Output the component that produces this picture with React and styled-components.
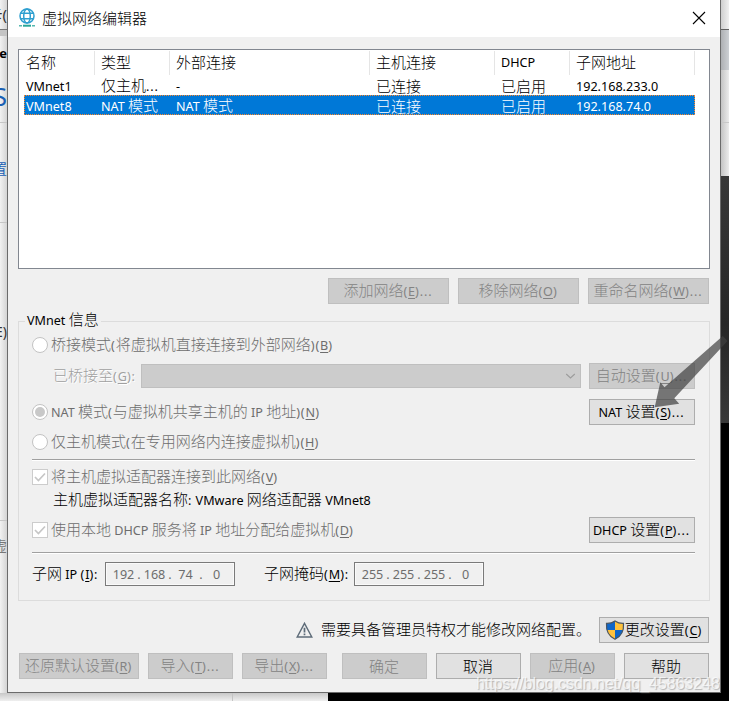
import React from "react";
import styled, { createGlobalStyle } from "styled-components";

const GlobalStyle = createGlobalStyle`
  * {
    box-sizing: border-box;
  }
  body {
    margin: 0;
    overflow: hidden;
    background: #ffffff;
    font-family: "Noto Sans", "Noto Sans CJK SC", sans-serif;
  }
`;

const Desktop = styled.div`
  position: relative;
  display: grid;
  grid-template-columns: 7px 714px 8px;
  grid-template-rows: 693px 8px;
  width: 730px;
  height: 702px;
  overflow: hidden;
  font-size: 15px;
  color: #000000;
`;

const LeftStrip = styled.div`
  display: flex;
  flex-direction: column;
  overflow: hidden;
  background: linear-gradient(to right, #f2f2f2, #d4d4d4);
`;

const StripCell = styled.div`
  display: flex;
  justify-content: flex-end;
  align-items: center;
  flex: none;
  height: ${(p) => p.$h}px;
  border-bottom: ${(p) => (p.$line ? `1px solid ${p.$line}` : "none")};
  background: ${(p) => p.$bg || "transparent"};
  color: ${(p) => p.$color || "#333333"};
  font-size: ${(p) => p.$size || 14}px;
  font-weight: ${(p) => p.$weight || 400};
  line-height: 1;
  white-space: nowrap;
`;

const RightStrip = styled.div`
  display: flex;
  flex-direction: column;
`;

const BottomStrip = styled.div`
  grid-column: 1 / 4;
  display: flex;
`;

const BottomLight = styled.div`
  width: ${(p) => p.$w}px;
  border-right: ${(p) => (p.$line ? "1px solid #c4c4c4" : "none")};
  background: linear-gradient(#c8c8c8, #efefef);
`;

const BottomDark = styled.div`
  flex: 1;
  background: #000000;
`;

const Dialog = styled.div`
  display: flex;
  flex-direction: column;
  border: 1px solid #6b6b6b;
  border-top: none;
  background: #f0f0f0;
`;

const TitleBar = styled.div`
  display: flex;
  align-items: center;
  flex: none;
  height: 37px;
  padding: 0 14px 1px 10px;
  background: #ffffff;
`;

const Title = styled.div`
  flex: 1;
  margin-left: 6px;
  font-size: 15px;
  line-height: 20px;
`;

const Body = styled.div`
  padding: 12px 10px 0;
`;

const ListView = styled.div`
  height: 220px;
  padding-top: 1px;
  border: 1px solid #828790;
  background: #ffffff;
`;

const ListHeader = styled.div`
  display: grid;
  grid-template-columns: 76px 75px 200px 125px 75px 125px;
  height: 24px;
`;

const HeaderCell = styled.div`
  display: flex;
  align-items: center;
  padding: 0 0 2px ${(p) => (p.$first ? 7 : 6)}px;
  border-right: 1px solid #e5e5e5;
`;

const ListRow = styled.div`
  display: grid;
  grid-template-columns: 71px 75px 200px 125px 75px 125px;
  width: 671px;
  height: 20px;
  margin-left: 5px;
  background: ${(p) => (p.$selected ? "#0078d7" : "transparent")};
  color: ${(p) => (p.$selected ? "#ffffff" : "#000000")};
  outline: ${(p) => (p.$selected ? "1px dotted #ff8728" : "none")};
  outline-offset: -1px;
`;

const ListCell = styled.div`
  display: flex;
  align-items: center;
  padding: 0 0 2px ${(p) => (p.$first ? 2 : 6)}px;
`;

const Text = styled.span`
  display: inline-block;
  font-weight: 300;
  line-height: 20px;
  white-space: pre;
`;

const Latin = styled.span`
  font-size: 12.6px;
  font-weight: 400;
`;

const Punct = styled(Latin)`
  letter-spacing: 0.9px;
`;

const Key = styled(Latin)`
  text-decoration: underline;
  text-underline-offset: 2px;
`;

const Button = styled.button`
  display: flex;
  align-items: center;
  justify-content: center;
  flex: none;
  width: ${(p) => p.$w}px;
  height: 26px;
  margin-left: ${(p) => p.$ml || 0}px;
  padding: 0 1px 1px 0;
  border: 1px solid #adadad;
  border-radius: 0;
  background: #e1e1e1;
  color: #000000;
  font-family: inherit;
  font-size: 15px;

  &:disabled {
    border-color: #bfbfbf;
    background: #cccccc;
    color: #838383;
  }
`;

const ListActions = styled.div`
  display: flex;
  justify-content: flex-end;
  gap: 9px;
  margin-top: 9px;
  padding-right: 1px;
`;

const Group = styled.div`
  height: 280px;
  margin-top: 17px;
  padding: 0 14px 0 13px;
  border: 1px solid #dcdcdc;
`;

const Legend = styled.div`
  display: flex;
  align-items: center;
  width: fit-content;
  height: 18px;
  margin: -10px 0 0 -7px;
  padding: 0 2px 2px;
  background: #f0f0f0;
`;

const Row = styled.div`
  display: flex;
  align-items: center;
  height: ${(p) => p.$h}px;
  margin-top: ${(p) => p.$mt || 0}px;
  padding-left: ${(p) => p.$pl || 0}px;
  color: ${(p) => p.$color || "#000000"};
`;

const Grow = styled.div`
  flex: 1;
`;

const Radio = styled.span`
  display: flex;
  align-items: center;
  justify-content: center;
  flex: none;
  width: 16px;
  height: 16px;
  margin-right: 3px;
  border: 1px solid #c3c3c3;
  border-radius: 50%;
  background: #ffffff;

  &::after {
    content: "";
    width: 10px;
    height: 10px;
    border-radius: 50%;
    background: ${(p) => (p.$on ? "#c8c8c8" : "transparent")};
  }
`;

const CheckBox = styled.span`
  display: flex;
  align-items: center;
  justify-content: center;
  flex: none;
  width: 16px;
  height: 16px;
  margin-right: 3px;
  border: 1px solid #cccccc;
  background: #ffffff;
`;

const Combo = styled.div`
  display: flex;
  align-items: center;
  justify-content: flex-end;
  width: 440px;
  height: 24px;
  padding-right: 4px;
  border: 1px solid #bfbfbf;
  background: #cccccc;
`;

const ComboLabel = styled.div`
  width: 88px;
  color: #a0a0a0;
  text-shadow: 1px 1px 0 #ffffff;
`;

const Separator = styled.div`
  height: 2px;
  margin-top: 7px;
  border-top: 1px solid #a0a0a0;
  border-bottom: 1px solid #ffffff;
`;

const IpLabel = styled.div`
  width: ${(p) => p.$w}px;
`;

const IpBox = styled.div`
  display: flex;
  align-items: center;
  width: 130px;
  height: 24px;
  padding-left: 4px;
  border: 1px solid #7a7a7a;
  box-shadow: inset 0 0 0 1px #fafafa;
  color: #6d6d6d;
  font-size: 12.6px;
`;

const Octet = styled.span`
  width: 27px;
  text-align: center;
`;

const Dot = styled.span`
  width: 4px;
  text-align: center;
`;

const Notice = styled.div`
  display: flex;
  align-items: center;
  justify-content: flex-end;
  margin-top: 16px;
  padding-right: 1px;
`;

const NoticeText = styled.div`
  width: 278px;
  margin-left: 8px;
  padding-bottom: 2px;
`;

const Footer = styled.div`
  display: flex;
  margin-top: 10px;
  padding-left: 1px;
`;

const Arrow = styled.svg`
  position: absolute;
  left: 650px;
  top: 330px;
`;

const Watermark = styled.div`
  position: absolute;
  left: 476px;
  top: 674px;
  color: rgba(255, 255, 255, 0.7);
  font-family: "Liberation Sans", sans-serif;
  font-size: 16px;
  letter-spacing: -0.05px;
  line-height: 20px;
  white-space: nowrap;
  text-shadow: 1px 1px 1px rgba(120, 120, 120, 0.5);
`;

// Latin runs are set smaller than the Chinese ones, "&X" marks an access key
const Label = ({ children }) => {
  const parts = children
    .split(/(&[A-Z]|\.{3}|[():]+|[\x20-\x25\x27\x2a-\x39\x3b-\x7e]+)/)
    .filter(Boolean);
  return (
    <Text>
      {parts.map((part, i) => {
        if (part[0] === "&") return <Key key={i}>{part[1]}</Key>;
        if (/^([():]+|\.{3})/.test(part)) return <Punct key={i}>{part}</Punct>;
        if (part.charCodeAt(0) < 128) return <Latin key={i}>{part}</Latin>;
        return part;
      })}
    </Text>
  );
};

const GlobeIcon = () => (
  <svg width="18" height="20" viewBox="0 0 18 20" fill="none" stroke="#2e9fd0" strokeWidth="1.5">
    <circle cx="9" cy="8" r="7" />
    <ellipse cx="9" cy="8" rx="3.3" ry="7" />
    <path d="M2.5 5.3h13M2.5 10.7h13" />
    <path d="M1 17.7h3M14 17.7h3" stroke="#55b8b0" />
    <path d="M5 17.7h8" stroke="#28a698" strokeWidth="2" />
  </svg>
);

const CloseIcon = () => (
  <svg width="14" height="14" viewBox="0 0 14 14" stroke="#000000" strokeWidth="1.1">
    <path d="M1 1l12 12M13 1L1 13" />
  </svg>
);

const CheckIcon = () => (
  <svg width="14" height="14" viewBox="0 0 14 14" fill="none" stroke="#c6c6c6" strokeWidth="1.7">
    <path d="M2 7l3.4 3.5L12 3.5" />
  </svg>
);

const ChevronIcon = () => (
  <svg width="11" height="8" viewBox="0 0 11 8" fill="none" stroke="#9c9c9c" strokeWidth="1.1">
    <path d="M1.2 2l4.3 4 4.3-4" />
  </svg>
);

const WarningIcon = () => (
  <svg width="17" height="16" viewBox="0 0 17 16" fill="none" stroke="#5d6b78">
    <path d="M8.5 1.3L15.8 15H1.2z" strokeWidth="1.4" />
    <path d="M8.5 5.8v4.6M8.5 11.6v1.6" strokeWidth="1.7" />
  </svg>
);

const ShieldIcon = () => (
  <svg width="20" height="20" viewBox="0 0 20 20">
    <defs>
      <clipPath id="shield">
        <path d="M10 1C7.5 2.8 4.5 3.5 1.5 3.4C1 10 3 16 10 19.3C17 16 19 10 18.5 3.4C15.5 3.5 12.5 2.8 10 1z" />
      </clipPath>
    </defs>
    <g clipPath="url(#shield)">
      <path d="M0 0h10v10H0z" fill="#0f66c8" />
      <path d="M10 0h10v10H10z" fill="#ffc23c" />
      <path d="M0 10h10v10H0z" fill="#ffc23c" />
      <path d="M10 10h10v10H10z" fill="#0f66c8" />
    </g>
    <path
      d="M10 1C7.5 2.8 4.5 3.5 1.5 3.4C1 10 3 16 10 19.3C17 16 19 10 18.5 3.4C15.5 3.5 12.5 2.8 10 1z"
      fill="none"
      stroke="#4a5560"
      strokeWidth="1.2"
    />
  </svg>
);

const headers = ["名称", "类型", "外部连接", "主机连接", "DHCP", "子网地址"];

const networks = [
  ["VMnet1", "仅主机...", "-", "已连接", "已启用", "192.168.233.0"],
  ["VMnet8", "NAT 模式", "NAT 模式", "已连接", "已启用", "192.168.74.0"],
];

const IpField = ({ value }) => (
  <IpBox>
    {value.map((n, i) => (
      <React.Fragment key={i}>
        {i > 0 && <Dot>.</Dot>}
        <Octet>{n}</Octet>
      </React.Fragment>
    ))}
  </IpBox>
);

const App = () => {
  return (
    <>
      <GlobalStyle />
      <Desktop>
        <LeftStrip>
          <StripCell $h={30} $line="#777777" $size={15}>卡(</StripCell>
          <StripCell $h={6} $bg="#c4c4c4" />
          <StripCell $h={35} $color="#000000" $weight={700} $size={13}>Ce</StripCell>
          <StripCell $h={52} $line="#c6c6c6" $color="#1a5fb4" $size={25}>S</StripCell>
          <StripCell $h={26} />
          <StripCell $h={40} $color="#1a5fb4" $size={14}>置</StripCell>
          <StripCell $h={34} $line="#c6c6c6" />
          <StripCell $h={217} $size={14}>E)</StripCell>
          <StripCell $h={81} $line="#c6c6c6" />
          <StripCell $h={50} $size={14} $color="#777777">虚</StripCell>
        </LeftStrip>
        <Dialog>
          <TitleBar>
            <GlobeIcon />
            <Title><Text>虚拟网络编辑器</Text></Title>
            <CloseIcon />
          </TitleBar>
          <Body>
            <ListView>
              <ListHeader>
                {headers.map((h, i) => (
                  <HeaderCell key={h} $first={i === 0}>
                    <Label>{h}</Label>
                  </HeaderCell>
                ))}
              </ListHeader>
              {networks.map((cells, i) => (
                <ListRow key={cells[0]} $selected={i === 1}>
                  {cells.map((c, j) => (
                    <ListCell key={j} $first={j === 0}>
                      <Label>{c}</Label>
                    </ListCell>
                  ))}
                </ListRow>
              ))}
            </ListView>
            <ListActions>
              <Button $w={121} disabled><Label>添加网络(&E)...</Label></Button>
              <Button $w={121} disabled><Label>移除网络(&O)</Label></Button>
              <Button $w={121} disabled><Label>重命名网络(&W)...</Label></Button>
            </ListActions>
            <Group>
              <Legend><Label>VMnet 信息</Label></Legend>
              <Row $h={30} $color="#6d6d6d">
                <Radio />
                <Label>桥接模式(将虚拟机直接连接到外部网络)(&B)</Label>
              </Row>
              <Row $h={32} $pl={21}>
                <ComboLabel><Label>已桥接至(&G):</Label></ComboLabel>
                <Combo><ChevronIcon /></Combo>
                <Grow />
                <Button $w={106} disabled><Label>自动设置(&U)...</Label></Button>
              </Row>
              <Row $h={40} $color="#6d6d6d">
                <Radio $on />
                <Label>NAT 模式(与虚拟机共享主机的 IP 地址)(&N)</Label>
                <Grow />
                <Button $w={106}><Label>NAT 设置(&S)...</Label></Button>
              </Row>
              <Row $h={20} $color="#6d6d6d">
                <Radio />
                <Label>仅主机模式(在专用网络内连接虚拟机)(&H)</Label>
              </Row>
              <Separator />
              <Row $h={32} $color="#6d6d6d">
                <CheckBox><CheckIcon /></CheckBox>
                <Label>将主机虚拟适配器连接到此网络(&V)</Label>
              </Row>
              <Row $h={14} $pl={21}>
                <Label>主机虚拟适配器名称: VMware 网络适配器 VMnet8</Label>
              </Row>
              <Row $h={30} $mt={8} $color="#6d6d6d">
                <CheckBox><CheckIcon /></CheckBox>
                <Label>使用本地 DHCP 服务将 IP 地址分配给虚拟机(&D)</Label>
                <Grow />
                <Button $w={106}><Label>DHCP 设置(&P)...</Label></Button>
              </Row>
              <Separator />
              <Row $h={40}>
                <IpLabel $w={73}><Label>子网 IP (&I):</Label></IpLabel>
                <IpField value={[192, 168, 74, 0]} />
                <Row $h={40} $pl={29}>
                  <IpLabel $w={90}><Label>子网掩码(&M):</Label></IpLabel>
                </Row>
                <IpField value={[255, 255, 255, 0]} />
              </Row>
            </Group>
            <Notice>
              <WarningIcon />
              <NoticeText><Label>需要具备管理员特权才能修改网络配置。</Label></NoticeText>
              <Button $w={110}>
                <ShieldIcon />
                <Label>更改设置(&C)</Label>
              </Button>
            </Notice>
            <Footer>
              <Button $w={120} disabled><Label>还原默认设置(&R)</Label></Button>
              <Button $w={85} $ml={9} disabled><Label>导入(&T)...</Label></Button>
              <Button $w={85} $ml={9} disabled><Label>导出(&X)...</Label></Button>
              <Button $w={85} $ml={15} disabled><Label>确定</Label></Button>
              <Button $w={85} $ml={9}><Label>取消</Label></Button>
              <Button $w={85} $ml={9} disabled><Label>应用(&A)</Label></Button>
              <Button $w={85} $ml={9}><Label>帮助</Label></Button>
            </Footer>
          </Body>
        </Dialog>
        <RightStrip>
          <StripCell $h={30} $line="#606060" $bg="linear-gradient(to right, #cfcfcf, #f0f0f0)" />
          <StripCell $h={40} $bg="linear-gradient(to right, #aeb0b3, #cdd0d4)" />
          <StripCell $h={53} $line="#c8c8c8" $bg="linear-gradient(to right, #c4c4c4, #ececec)" />
          <StripCell $h={53} $bg="linear-gradient(to right, #c4c4c4, #ececec)" />
          <StripCell $h={247} $bg="linear-gradient(#383838, #262626 60%, #383838)" />
          <StripCell $h={270} $bg="#000000" />
        </RightStrip>
        <BottomStrip>
          <BottomLight $w={233} $line />
          <BottomLight $w={95} />
          <BottomDark />
        </BottomStrip>
        <Arrow width="80" height="80" viewBox="650 330 80 80">
          <path
            d="M722.8 336L727.5 341L674.3 398.3L679.2 403.8L654.7 407.2L660.3 382.3L664.5 387.2z"
            fill="#404040"
            fillOpacity="0.7"
          />
        </Arrow>
        <Watermark>https://blog.csdn.net/qq_45863248</Watermark>
      </Desktop>
    </>
  );
};

export default App;
